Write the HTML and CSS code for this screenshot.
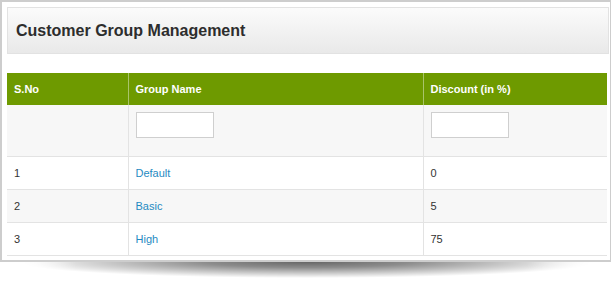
FILE: index.html
```html
<!DOCTYPE html>
<html>
<head>
<meta charset="utf-8">
<link rel="stylesheet" href="styles.css">
</head>
<body>
<div class="page">
  <div class="panel">
    <div class="panel-head">
      <h1 class="title">Customer Group Management</h1>
    </div>
    <table class="grid">
      <colgroup>
        <col class="c1"><col class="c2"><col class="c3">
      </colgroup>
      <thead>
        <tr><th>S.No</th><th>Group Name</th><th>Discount (in %)</th></tr>
      </thead>
      <tbody>
        <tr class="filter"><td></td><td><input type="text" class="fin"></td><td><input type="text" class="fin"></td></tr>
        <tr><td>1</td><td><a href="#">Default</a></td><td>0</td></tr>
        <tr class="alt"><td>2</td><td><a href="#">Basic</a></td><td>5</td></tr>
        <tr><td>3</td><td><a href="#">High</a></td><td>75</td></tr>
      </tbody>
    </table>
  </div>
  <div class="lift-shadow"></div>
</div>
</body>
</html>
```

FILE: styles.css
```css
html { background: #fff; }
html, body { margin: 0; padding: 0; }
body { font-family: "Liberation Sans", Arial, sans-serif; color: #333; }

.page { height: 283px; }

.panel {
  width: 602px;
  border: 2px solid #cdcdcd;
  border-right-width: 3px;
  padding: 5px 1px 2px 5px;
  background: #fff;
  box-sizing: content-box;
  height: 251px;
}
.lift-shadow {
  margin: 0 14px 0 18px;
  height: 16px;
  background: radial-gradient(ellipse 50% 100% at 50% 0, rgba(0,0,0,0.6) 0%, rgba(0,0,0,0.45) 35%, rgba(0,0,0,0) 100%);
  -webkit-mask-image: linear-gradient(to right, transparent 0%, #000 10%, #000 88%, transparent 100%);
  mask-image: linear-gradient(to right, transparent 0%, #000 10%, #000 88%, transparent 100%);
}

.panel-head {
  height: 45px;
  border: 1px solid #e2e2e2;
  background: linear-gradient(#fbfbfb, #e9e9e9);
  display: flex;
  align-items: center;
  padding-left: 8px;
}
.title {
  margin: 0;
  font-size: 16px;
  font-weight: bold;
  color: #2d2d2d;
}

.grid {
  margin-top: 19px;
  width: 600px;
  border-collapse: collapse;
  font-size: 11px;
}
.c1 { width: 121px; }
.c2 { width: 295px; }
.grid th {
  background: #6e9a00;
  color: #fff;
  font-weight: bold;
  text-align: left;
  height: 32px;
  padding: 0 7px;
  border-left: 1px solid #a9c46a;
  box-sizing: border-box;
}
.grid th:first-child { border-left: 0; }
.grid td {
  height: 33px;
  padding: 0 7px;
  border: 1px solid #e3e3e3;
  border-top: 0;
  box-sizing: border-box;
  color: #333;
}
.grid td:first-child { border-left: 0; }
.grid td:last-child { border-right: 0; }
.grid tr.filter td { height: 51px; background: #f7f7f7; vertical-align: top; padding-top: 7px; }
.grid tr.alt td { background: #f7f7f7; }
.grid a { color: #1f8ac2; text-decoration: none; }
.fin {
  width: 78px;
  height: 26px;
  box-sizing: border-box;
  border: 1px solid #cfcfcf;
  background: #fff;
  margin: 0;
}
```
